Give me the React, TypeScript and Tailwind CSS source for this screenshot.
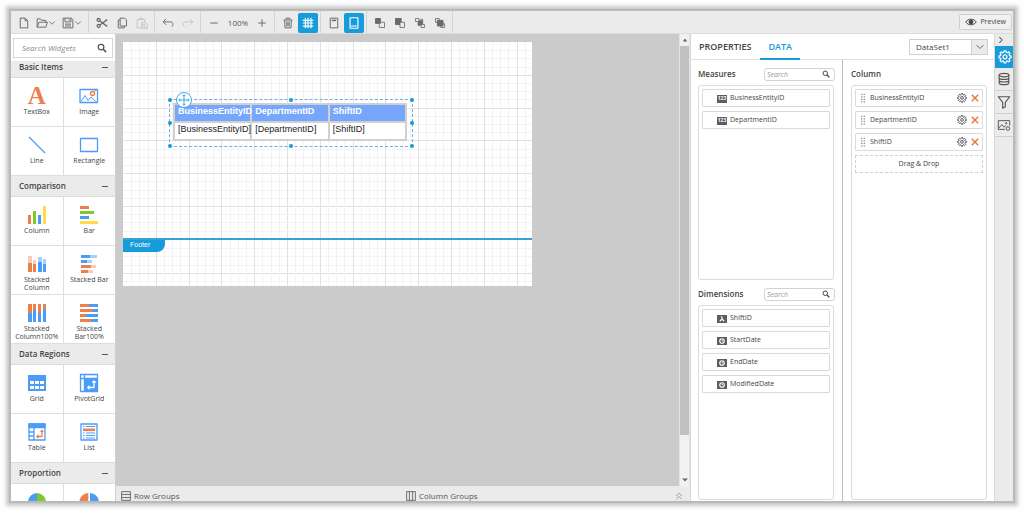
import React from "react";

type IconProps = { className?: string };
type SvgProps = { box?: string; className?: string; children: React.ReactNode };

function Svg({ box = "0 0 16 16", className = "size-3", children }: SvgProps) {
  return (
    <svg
      viewBox={box}
      className={`block shrink-0 ${className}`}
      fill="none"
      stroke="currentColor"
      strokeWidth="1.3"
      strokeLinejoin="round"
      aria-hidden="true"
    >
      {children}
    </svg>
  );
}

/* ---------- toolbar icons ---------- */

const NewIcon = () => (
  <Svg>
    <path d="M3 1.500h6.500L13 5v9.500H3zM9.500 1.500V5H13" />
  </Svg>
);
const OpenIcon = () => (
  <Svg>
    <path d="M1.500 13.500v-11h4.500l1.500 2h5.500v2.500M1.500 13.500l2.500-6.500h11.300l-2.300 6.500z" />
  </Svg>
);
const SaveIcon = () => (
  <Svg>
    <path d="M1.500 1.500h11l2 2v11h-13zM4 1.500v5h8v-5M4 9.500h8M4 12h8M9.500 3v2" />
  </Svg>
);
const Chevron = ({ className = "size-2" }: IconProps) => (
  <Svg box="0 0 10 10" className={className}>
    <path d="M1.500 3l3.500 3.500L8.500 3" strokeWidth="1" />
  </Svg>
);
const CutIcon = () => (
  <Svg>
    <g strokeWidth="1.700">
      <circle cx="3.500" cy="4" r="2" />
      <circle cx="3.500" cy="12" r="2" />
      <path d="M5.200 5.200L15 12.500M5.200 10.800L15 3.500" />
    </g>
  </Svg>
);
const CopyIcon = () => (
  <Svg>
    <path d="M5.500 1.500h6l2.500 2.500v8h-8.500zM5.500 4H3v10.500h8V12" />
  </Svg>
);
const PasteIcon = () => (
  <Svg>
    <path d="M7 14.500H1.500v-11h10V7M4.500 3.500v-2h4v2M7.500 7.500h5l2.500 2.500v5H7.500z" />
    <path d="M9 10h3M9 12.500h4" />
  </Svg>
);
const UndoIcon = () => (
  <Svg>
    <path d="M5.500 2.500L1.500 6.500l4 4M1.500 6.500H11c4 0 4.500 4.500 2 6.500" />
  </Svg>
);
const RedoIcon = () => (
  <Svg>
    <path d="M10.500 2.500l4 4-4 4M14.500 6.500H5c-4 0-4.500 4.500-2 6.500" />
  </Svg>
);
const MinusIcon = () => (
  <Svg>
    <path d="M3 8h10" />
  </Svg>
);
const PlusIcon = () => (
  <Svg>
    <path d="M3 8h10M8 3v10" />
  </Svg>
);
const TrashIcon = () => (
  <Svg>
    <path d="M2 4h12M5.500 3.500v-2h5v2M3.500 4l.5 10.500h8l.5-10.500M6.300 6v6.500M8 6v6.500M9.700 6v6.500" />
  </Svg>
);
const GridIcon = () => (
  <Svg className="size-3.5">
    <path d="M5 2v12M8 2v12M11.500 2v12M2 5h12M2 8h12M2 11.500h12" />
  </Svg>
);
const HeaderIcon = () => (
  <Svg>
    <path d="M3 1.500h10v13H3z" />
    <path d="M5 4.500h6" strokeWidth="2" />
  </Svg>
);
const FooterIcon = () => (
  <Svg className="size-3.5">
    <path d="M3.500 2h9v12h-9z" />
    <path d="M5 11.500h6" strokeWidth="1.600" strokeDasharray="1.500 .6" />
  </Svg>
);
const BringFrontIcon = () => (
  <Svg>
    <path d="M9.500 7H14v7H7V9.500" strokeWidth="1.100" />
    <path d="M2 2h6.500v6.500H2z" fill="currentColor" />
  </Svg>
);
const SendBackIcon = () => (
  <Svg>
    <path d="M2 2h7.500v8H2z" fill="currentColor" />
    <path d="M8 7h6v7H8z" fill="#ebebeb" strokeWidth="1.100" />
  </Svg>
);
const ForwardIcon = () => (
  <Svg>
    <path d="M5.500 5h6v6h-6z" fill="currentColor" />
    <path d="M2 2h4.500v4H2zM9.500 10H14v4H9.500z" fill="#ebebeb" strokeWidth="1.100" />
    <path d="M8.500 3h3v2" strokeWidth="1.100" />
  </Svg>
);
const BackwardIcon = () => (
  <Svg>
    <path d="M2 2h5v5H2zM9 9h5v5H9z" strokeWidth="1.100" />
    <path d="M4.500 4.500H12V12H4.500z" fill="currentColor" />
  </Svg>
);
const EyeIcon = () => (
  <Svg>
    <path d="M1 8c3-5 11-5 14 0-3 5-11 5-14 0z" />
    <circle cx="8" cy="8" r="2.600" fill="currentColor" />
  </Svg>
);
const SearchIcon = ({ className = "size-2.5" }: IconProps) => (
  <Svg className={className}>
    <circle cx="6.500" cy="6.500" r="4.500" strokeWidth="2" />
    <path d="M10 10l4.500 4.500" strokeWidth="2.600" />
  </Svg>
);
const gearPath =
  "M6.800 1h2.400l.4 2 1.400.6 1.700-1.200 1.700 1.700-1.200 1.700.6 1.400 2 .4v2.400l-2 .4-.6 1.400 1.200 1.700-1.700 1.700-1.700-1.200-1.400.6-.4 2H6.800l-.4-2-1.400-.6-1.700 1.200-1.700-1.700 1.200-1.700-.6-1.400-2-.4V7.600l2-.4.6-1.400-1.200-1.700 1.700-1.700L5 3.600 6.400 3z";
const GearIcon = ({ className = "size-2.5" }: IconProps) => (
  <Svg box="-0.500 0 17 18" className={className}>
    <path d={gearPath} strokeWidth="1.600" />
    <circle cx="8" cy="8.800" r="2.500" strokeWidth="1.600" />
  </Svg>
);

/* ---------- widget icons ---------- */

const ORANGE = "#ec7f4c";
const BLUE = "#4a9cf8";
const GREEN = "#7ec928";
const YELLOW = "#ffdc45";
const PALE_BLUE = "#a9d0fb";
const PALE_ORANGE = "#f5cdb8";

type Rect = [number, number, number, number, string];
const Bars = ({ rects }: { rects: Rect[] }) => (
  <Svg box="0 0 20 20" className="size-5">
    {rects.map(([x, y, w, h, fill], i) => (
      <rect key={i} x={x} y={y} width={w} height={h} fill={fill} stroke="none" />
    ))}
  </Svg>
);

const TextBoxIcon = () => (
  <span className="h-5 font-['Liberation_Serif',serif] text-[25px] leading-5 font-bold text-[#ec7f4c]" aria-hidden="true">
    A
  </span>
);
const ImageIcon = () => (
  <Svg box="0 0 20 20" className="size-5">
    <g stroke={BLUE}>
      <path d="M1 3.500h17.500v13H1z" />
      <path d="M2 15.500l4-6 3 5 3-3.500 5.500 5" strokeWidth="1" />
    </g>
    <circle cx="13.500" cy="7.500" r="2" stroke={ORANGE} />
    <path d="M15.500 5l2-1.500" stroke={ORANGE} />
  </Svg>
);
const LineIcon = () => (
  <Svg box="0 0 20 20" className="size-5">
    <path d="M2 2l16 16" stroke={BLUE} />
  </Svg>
);
const RectangleIcon = () => (
  <Svg box="0 0 20 20" className="size-5">
    <path d="M1.500 3.500h17v13h-17z" stroke={BLUE} />
  </Svg>
);
const ColumnIcon = () => (
  <Bars
    rects={[
      [1, 10, 3, 9, ORANGE],
      [6, 6, 3, 13, GREEN],
      [11, 10, 3, 9, BLUE],
      [16, 1, 3, 18, YELLOW],
    ]}
  />
);
const BarIcon = () => (
  <Bars
    rects={[
      [1, 1, 9, 3, ORANGE],
      [1, 6, 14, 3, GREEN],
      [1, 11, 9, 3, BLUE],
      [1, 16, 18, 3, YELLOW],
    ]}
  />
);
const StackedColumnIcon = () => (
  <Bars
    rects={[
      [1, 2, 4, 7, PALE_ORANGE],
      [1, 9, 4, 9, ORANGE],
      [6, 6, 3, 4, PALE_ORANGE],
      [6, 10, 3, 8, ORANGE],
      [11, 3, 4, 5, PALE_BLUE],
      [11, 8, 4, 10, BLUE],
      [16, 5, 3, 5, PALE_BLUE],
      [16, 10, 3, 8, BLUE],
    ]}
  />
);
const StackedBarIcon = () => (
  <Bars
    rects={[
      [2, 1, 9, 3, BLUE],
      [11, 1, 7, 3, PALE_BLUE],
      [2, 6, 6, 3, BLUE],
      [8, 6, 5, 3, PALE_BLUE],
      [2, 11, 10, 3, ORANGE],
      [12, 11, 5, 3, PALE_ORANGE],
      [2, 16, 7, 3, ORANGE],
      [9, 16, 5, 3, PALE_ORANGE],
    ]}
  />
);
const StackedColumn100Icon = () => (
  <Bars
    rects={[
      [1, 1, 4, 9, ORANGE],
      [1, 10, 4, 9, BLUE],
      [6, 1, 3, 6, ORANGE],
      [6, 7, 3, 12, BLUE],
      [11, 1, 3, 9, ORANGE],
      [11, 10, 3, 9, BLUE],
      [16, 1, 3, 5, ORANGE],
      [16, 6, 3, 13, BLUE],
    ]}
  />
);
const StackedBar100Icon = () => (
  <Bars
    rects={[
      [1, 1, 9, 3, ORANGE],
      [10, 1, 9, 3, BLUE],
      [1, 6, 13, 3, ORANGE],
      [14, 6, 5, 3, BLUE],
      [1, 11, 6, 3, ORANGE],
      [7, 11, 12, 3, BLUE],
      [1, 16, 11, 3, ORANGE],
      [12, 16, 7, 3, BLUE],
    ]}
  />
);
const GridWidgetIcon = () => (
  <Bars
    rects={[
      [1, 2, 18, 16, BLUE],
      [3, 8, 4, 3, "#fff"],
      [8, 8, 4, 3, "#fff"],
      [13, 8, 4, 3, "#fff"],
      [3, 13, 4, 3, "#fff"],
      [8, 13, 4, 3, "#fff"],
      [13, 13, 4, 3, "#fff"],
    ]}
  />
);
const PivotGridIcon = () => (
  <Svg box="0 0 20 20" className="size-5">
    <path d="M1.500 1.500h17v17h-17zM5.500 1.500v17M1.500 5.500h17" stroke={BLUE} />
    <path d="M6 6h12v12H6z" fill={BLUE} stroke={BLUE} />
    <path d="M15 8v6.500H9M13.300 9.500L15 8l1.700 1.500M10.500 12.800L8.800 14.500l1.700 1.700" stroke="#fff" />
  </Svg>
);
const TableWidgetIcon = () => (
  <Svg box="0 0 20 20" className="size-5">
    <path d="M2 2h16v16H2zM7 6v12M2 10h5M2 14h5" stroke={BLUE} />
    <path d="M2 2h16v3.500H2z" fill={BLUE} stroke={BLUE} />
    <path d="M15 8.500v6H10M13.500 9.800L15 8.500l1.500 1.300M11.300 13L9.800 14.500l1.500 1.500" stroke={ORANGE} />
  </Svg>
);
const ListWidgetIcon = () => (
  <Svg box="0 0 20 20" className="size-5">
    <path d="M2 2h16v16H2z" stroke={BLUE} />
    <path d="M4 4.500h1.500M7 4.500h9M4 11h1.500M7 11h9M4 13.500h1.500M7 13.500h9M4 16h1.500M7 16h9" stroke={BLUE} strokeWidth="1" />
    <path d="M4 7.800h12" stroke={ORANGE} strokeWidth="2.600" />
  </Svg>
);
const PieIcon = () => (
  <Svg box="0 0 20 20" className="size-5">
    <path d="M10 10V1a9 9 0 0 0 0 18z" fill={BLUE} stroke="none" />
    <path d="M10 10V1a9 9 0 0 1 0 18z" fill={GREEN} stroke="none" />
  </Svg>
);
const DoughnutIcon = () => (
  <Svg box="0 0 20 20" className="size-5">
    <path d="M9.300 1a9 9 0 0 0 0 18z" fill={ORANGE} stroke="none" />
    <path d="M11 1a9 9 0 0 1 0 18z" fill={BLUE} stroke="none" />
  </Svg>
);

type Widget = { name: string; iconOnly?: boolean; Icon: () => React.ReactElement };
const sections: { title: string; widgets: Widget[] }[] = [
  {
    title: "Basic Items",
    widgets: [
      { name: "TextBox", Icon: TextBoxIcon },
      { name: "Image", Icon: ImageIcon },
      { name: "Line", Icon: LineIcon },
      { name: "Rectangle", Icon: RectangleIcon },
    ],
  },
  {
    title: "Comparison",
    widgets: [
      { name: "Column", Icon: ColumnIcon },
      { name: "Bar", Icon: BarIcon },
      { name: "Stacked Column", Icon: StackedColumnIcon },
      { name: "Stacked Bar", Icon: StackedBarIcon },
      { name: "Stacked Column100%", Icon: StackedColumn100Icon },
      { name: "Stacked Bar100%", Icon: StackedBar100Icon },
    ],
  },
  {
    title: "Data Regions",
    widgets: [
      { name: "Grid", Icon: GridWidgetIcon },
      { name: "PivotGrid", Icon: PivotGridIcon },
      { name: "Table", Icon: TableWidgetIcon },
      { name: "List", Icon: ListWidgetIcon },
    ],
  },
  {
    title: "Proportion",
    widgets: [
      { name: "Pie", iconOnly: true, Icon: PieIcon },
      { name: "Doughnut", iconOnly: true, Icon: DoughnutIcon },
    ],
  },
];

/* ---------- toolbar ---------- */

type ToolProps = { label: string; active?: boolean; faded?: boolean; children: React.ReactNode };
function Tool({ label, active, faded, children }: ToolProps) {
  return (
    <button
      type="button"
      aria-label={label}
      className={`flex h-5 w-5 items-center justify-center rounded-[2px] ${
        active ? "bg-[#169bdb] text-white" : faded ? "text-[#c4c4c4]" : "text-[#6a6a6a]"
      }`}
    >
      {children}
    </button>
  );
}

function MenuTool({ label, children }: ToolProps) {
  return (
    <button type="button" aria-label={label} className="flex h-5 w-[26px] items-center pl-[2px] text-[#6a6a6a]">
      {children}
      <Chevron />
    </button>
  );
}

function ToolGroup({ children }: { children: React.ReactNode }) {
  return <div className="flex h-full items-center border-r border-[#d4d4d4] pt-px pr-[2px] pl-[3px]">{children}</div>;
}

function Toolbar() {
  return (
    <header className="flex h-[23px] shrink-0 items-center border-b border-[#dcdcdc] bg-[#ebebeb]">
      <ToolGroup>
        <Tool label="New"><NewIcon /></Tool>
        <MenuTool label="Open"><OpenIcon /></MenuTool>
        <MenuTool label="Save"><SaveIcon /></MenuTool>
      </ToolGroup>
      <ToolGroup>
        <Tool label="Cut"><CutIcon /></Tool>
        <Tool label="Copy"><CopyIcon /></Tool>
        <Tool label="Paste" faded><PasteIcon /></Tool>
      </ToolGroup>
      <ToolGroup>
        <Tool label="Undo"><UndoIcon /></Tool>
        <Tool label="Redo" faded><RedoIcon /></Tool>
      </ToolGroup>
      <ToolGroup>
        <Tool label="Zoom out"><MinusIcon /></Tool>
        <span className="w-7 text-center text-[8px] text-[#555]">100%</span>
        <Tool label="Zoom in"><PlusIcon /></Tool>
      </ToolGroup>
      <ToolGroup>
        <Tool label="Delete"><TrashIcon /></Tool>
        <Tool label="Show grid" active><GridIcon /></Tool>
      </ToolGroup>
      <ToolGroup>
        <Tool label="Header"><HeaderIcon /></Tool>
        <Tool label="Footer" active><FooterIcon /></Tool>
      </ToolGroup>
      <ToolGroup>
        <Tool label="Bring to front"><BringFrontIcon /></Tool>
        <Tool label="Send to back"><SendBackIcon /></Tool>
        <Tool label="Bring forward"><ForwardIcon /></Tool>
        <Tool label="Send backward"><BackwardIcon /></Tool>
      </ToolGroup>
      <button
        type="button"
        className="mr-px ml-auto flex h-4 items-center gap-[3px] rounded-[2px] border border-[#cfcfcf] bg-[#f1f1f1] px-[5px] text-[7px] text-[#444]"
      >
        <EyeIcon />
        Preview
      </button>
    </header>
  );
}

/* ---------- widget palette ---------- */

function Palette() {
  return (
    <aside className="flex w-[105px] shrink-0 flex-col border-r border-[#cfcfcf] bg-[#ebebeb]">
      <div className="h-[27px] shrink-0 bg-white px-[2px] pt-1">
        <label className="flex h-5 items-center border border-[#d6d6d6] bg-white pr-[5px] pl-2 text-[#555]">
          <input
            type="text"
            aria-label="Search Widgets"
            placeholder="Search Widgets"
            className="min-w-0 flex-1 text-[8px] outline-none placeholder:text-[#8a8a8a] placeholder:italic"
          />
          <SearchIcon />
        </label>
      </div>
      <div className="min-h-0 flex-1 overflow-hidden">
        <div className="-mt-1">
          {sections.map((section) => (
            <section key={section.title}>
              <h2 className="flex h-[21px] items-center justify-between border-b border-[#dadada] bg-[#ebebeb] pr-1.5 pl-2 text-[8px] font-semibold text-[#444]">
                {section.title}
                <button type="button" aria-label={`Collapse ${section.title}`} className="mr-px h-px w-1.5 bg-[#555]" />
              </h2>
              <div className="grid grid-cols-2 gap-px bg-[#dedede] pb-px">
                {section.widgets.map(({ name, iconOnly, Icon }) => (
                  <button
                    key={name}
                    type="button"
                    aria-label={name}
                    className="flex h-12 flex-col items-center gap-[2px] bg-white px-1 pt-2 text-center text-[7px] leading-2 text-[#444]"
                  >
                    <Icon />
                    {!iconOnly && name}
                  </button>
                ))}
              </div>
            </section>
          ))}
        </div>
      </div>
    </aside>
  );
}

/* ---------- design surface ---------- */

const GRID_STEP = 8.2;
const gridLines = Array.from({ length: 50 }, (_, i) => i + 1);

function GridPaper() {
  return (
    <svg className="absolute inset-0 size-full" shapeRendering="crispEdges" aria-hidden="true">
      {gridLines.map((n) => {
        const at = Math.round(n * GRID_STEP);
        return (
          <g key={n} fill={n % 4 === 0 ? "#e1e1e1" : "#f3f3f3"}>
            <rect x={at} y="0" width="1" height="100%" />
            <rect x="0" y={at} width="100%" height="1" />
          </g>
        );
      })}
    </svg>
  );
}

const handles = [
  "left-0 top-0",
  "left-1/2 top-0",
  "left-full top-0",
  "left-0 top-1/2",
  "left-full top-1/2",
  "left-0 top-full",
  "left-1/2 top-full",
  "left-full top-full",
];
const fields = ["BusinessEntityID", "DepartmentID", "ShiftID"];

function ReportTable() {
  return (
    <div className="absolute top-[57px] left-[46px] border border-dashed border-[#6fb0e2] pt-[3px] pr-[5px] pb-[5px] pl-[3px] font-['Liberation_Sans',Arial,sans-serif] text-[9px] leading-3">
      <table className="w-[234px] table-fixed border-collapse bg-white">
        <thead>
          <tr className="h-[18px] bg-[#77a7fd] text-white">
            {fields.map((field) => (
              <th key={field} scope="col" className="border-2 border-[#d0d0d0] p-0 pb-1 pl-[3px] text-left font-bold whitespace-nowrap">
                {field}
              </th>
            ))}
          </tr>
        </thead>
        <tbody>
          <tr className="h-[18px] text-[#222]">
            {fields.map((field) => (
              <td key={field} className="border-2 border-[#d0d0d0] p-0 pb-1 pl-[3px] whitespace-nowrap">
                [{field}]
              </td>
            ))}
          </tr>
        </tbody>
      </table>
      {handles.map((place) => (
        <span key={place} className={`absolute size-1 -translate-1/2 rounded-full bg-[#169bdb] ${place}`} />
      ))}
      <span className="absolute -top-2 left-1.5 flex size-4 items-center justify-center rounded-full border border-[#4aa8de] bg-white text-[#3f9fd8]">
        <Svg>
          <path d="M8 1v14M1 8h14M6 3l2-2 2 2M6 13l2 2 2-2M3 6L1 8l2 2M13 6l2 2-2 2" />
        </Svg>
      </span>
    </div>
  );
}

function Designer() {
  return (
    <main className="flex min-w-0 flex-1 flex-col">
      <div className="flex min-h-0 flex-1">
        <div className="min-w-0 flex-1 overflow-hidden bg-[#cbcbcb] pt-2 pl-[7px]">
          <div className="w-[409px] bg-white">
            <div className="relative h-[196px]">
              <GridPaper />
              <ReportTable />
            </div>
            <div className="relative h-12 border-t-2 border-[#3a9fdb]">
              <GridPaper />
              <span className="relative flex h-3 w-[42px] items-center rounded-br-lg bg-[#169bdb] pb-[2px] pl-[7px] font-['Liberation_Sans',Arial,sans-serif] text-[7px] text-white">
                Footer
              </span>
            </div>
          </div>
        </div>
        <div className="flex w-[11px] shrink-0 flex-col items-center border-x border-[#e2e2e2] bg-[#f0f2f2] text-[#666]">
          <div className="flex h-3 items-center">
            <Svg box="0 0 8 8" className="size-1.5">
              <path d="M1 6l3-4 3 4z" fill="currentColor" stroke="none" />
            </Svg>
          </div>
          <div className="w-full flex-[10] bg-[#c1c1c1]" />
          <div className="flex-1" />
          <div className="flex h-3 items-center">
            <Svg box="0 0 8 8" className="size-1.5">
              <path d="M0 2l4 4 4-4z" fill="currentColor" stroke="none" />
            </Svg>
          </div>
        </div>
      </div>
      <footer className="flex h-[15px] shrink-0 items-center bg-[#ebebeb] px-[5px] pt-1 text-[8px] text-[#555]">
        <div className="flex flex-1 items-center gap-[3px]">
          <Svg className="size-2.5">
            <path d="M1 1h14v14H1zM1 5.500h14M1 10.500h14" />
          </Svg>
          Row Groups
        </div>
        <div className="flex flex-1 items-center gap-[3px] pl-1.5">
          <Svg className="size-2.5">
            <path d="M1 1h14v14H1zM5.500 1v14M10.500 1v14" />
          </Svg>
          Column Groups
          <button type="button" aria-label="Expand groups" className="mr-[2px] ml-auto text-[#8a8a8a]">
            <Svg box="0 0 10 10" className="size-2">
              <path d="M1.500 5L5 1.500 8.500 5M1.500 9L5 5.500 8.500 9" strokeWidth="1" />
            </Svg>
          </button>
        </div>
      </footer>
    </main>
  );
}

/* ---------- data panel ---------- */

type Kind = "number" | "text" | "date";
function KindBadge({ kind }: { kind: Kind }) {
  return (
    <span className="flex h-2 w-2.5 shrink-0 items-center justify-center bg-[#5c5c62] text-[5px] leading-none font-bold text-white">
      {kind === "number" && "123"}
      {kind === "text" && (
        <Svg className="size-1.5">
          <path d="M2 14l6-6 6 6M8 8V2M5 2h3" strokeWidth="3" />
        </Svg>
      )}
      {kind === "date" && (
        <Svg className="size-1.5">
          <circle cx="8" cy="8" r="6" strokeWidth="3" />
          <path d="M8 5v3h3" strokeWidth="2" />
        </Svg>
      )}
    </span>
  );
}

function FieldList({ title, items }: { title: string; items: [string, Kind][] }) {
  return (
    <section className="flex min-h-0 flex-1 flex-col gap-[5px]">
      <div className="flex h-3 shrink-0 items-center justify-between">
        <h3 className="text-[8px] font-semibold text-[#444]">{title}</h3>
        <label className="-mr-px flex h-[13px] w-[71px] items-center rounded-[3px] border border-[#d2d2d2] pr-1 pl-[2px] text-[#444]">
          <input
            type="text"
            aria-label={`Search ${title}`}
            placeholder="Search"
            className="h-full min-w-0 flex-1 text-[7px] outline-none placeholder:text-[#999] placeholder:italic"
          />
          <SearchIcon className="size-2" />
        </label>
      </div>
      <ul className="flex min-h-0 flex-1 flex-col gap-1 rounded-[3px] border border-[#dcdcdc] p-[3px]">
        {items.map(([name, kind]) => (
          <li key={name} className="flex h-[18px] items-center gap-[3px] rounded-[1px] border border-[#dadada] pt-px pl-3.5 text-[7px] text-[#444]">
            <KindBadge kind={kind} />
            {name}
          </li>
        ))}
      </ul>
    </section>
  );
}

function DataPanel() {
  return (
    <section className="flex w-[305px] shrink-0 flex-col border-x border-[#d8d8d8] bg-white">
      <nav className="flex h-[26px] shrink-0 items-center border-b border-[#dedede] pr-1.5 pl-[2px] text-[9px] font-semibold text-[#444]">
        <button type="button" className="h-[26px] px-1.5 pt-px">PROPERTIES</button>
        <button type="button" className="ml-[3px] h-[26px] border-b-2 border-[#169bdb] px-2 pt-[3px] text-[#169bdb]">DATA</button>
        <div className="relative ml-auto h-4 w-[79px] text-[8px] font-normal text-[#444]">
          <select aria-label="Data set" className="size-full appearance-none border border-[#cfcfcf] bg-white pl-1.5 outline-none">
            <option>DataSet1</option>
          </select>
          <span className="pointer-events-none absolute top-0 right-0 flex h-full w-[17px] items-center justify-center border border-[#cfcfcf] bg-[#ebebeb] text-[#666]">
            <Chevron className="size-2.5" />
          </span>
        </div>
      </nav>
      <div className="flex min-h-0 flex-1">
        <div className="flex w-[152px] shrink-0 flex-col gap-2 border-r border-[#bdbdbd] pt-2 pr-2 pb-px pl-[7px]">
          <FieldList
            title="Measures"
            items={[
              ["BusinessEntityID", "number"],
              ["DepartmentID", "number"],
            ]}
          />
          <FieldList
            title="Dimensions"
            items={[
              ["ShiftID", "text"],
              ["StartDate", "date"],
              ["EndDate", "date"],
              ["ModifiedDate", "date"],
            ]}
          />
        </div>
        <div className="flex flex-1 flex-col gap-[5px] pt-2 pr-[7px] pb-px pl-2">
          <h3 className="flex h-3 items-center text-[8px] font-semibold text-[#444]">Column</h3>
          <ul className="flex min-h-0 flex-1 flex-col gap-1 rounded-[3px] border border-[#dcdcdc] p-[3px] text-[7px] text-[#444]">
            {fields.map((field) => (
              <li key={field} className="flex h-[18px] items-center gap-1 rounded-[1px] border border-[#dadada] pr-[3px] pl-1">
                <Svg box="0 0 6 12" className="h-2.5 w-1.5 text-[#777]">
                  <path d="M1.500 1v11M4.500 1v11" strokeDasharray="1.500 1.500" />
                </Svg>
                <span className="flex-1 pt-px">{field}</span>
                <button type="button" aria-label={`${field} settings`} className="text-[#444]">
                  <GearIcon />
                </button>
                <button type="button" aria-label={`Remove ${field}`} className="text-[#ee6b33]">
                  <Svg box="0 0 10 10" className="size-2">
                    <path d="M1 1l8 8M9 1L1 9" strokeWidth="1.600" />
                  </Svg>
                </button>
              </li>
            ))}
            <li className="flex h-[18px] items-center justify-center border border-dashed border-[#d0d0d0]">Drag &amp; Drop</li>
          </ul>
        </div>
      </div>
    </section>
  );
}

function SideRail() {
  const cell = "flex h-[23px] w-full items-center justify-center border-b border-[#d0d0d0] text-[#555]";
  return (
    <nav className="flex w-[18px] shrink-0 flex-col bg-[#ebebeb]">
      <button type="button" aria-label="Collapse panel" className="flex h-3 items-center pl-[2px] text-[#555]">
        <Svg box="0 0 10 10" className="size-2">
          <path d="M3 1.500L6.500 5 3 8.500" />
        </Svg>
      </button>
      <button type="button" aria-label="Properties" className="flex h-[22px] w-full items-center justify-end bg-[#169bdb] pr-px text-white">
        <GearIcon className="size-3.5" />
      </button>
      <button type="button" aria-label="Data" className={cell}>
        <Svg className="size-3.5">
          <ellipse cx="8" cy="3.500" rx="5.500" ry="2" />
          <path d="M2.500 3.500v9c0 2.600 11 2.600 11 0v-9M2.500 6.500c0 2.600 11 2.600 11 0M2.500 9.500c0 2.600 11 2.600 11 0" />
        </Svg>
      </button>
      <button type="button" aria-label="Filters" className={cell}>
        <Svg className="size-3.5">
          <path d="M1.500 2h13L9.500 8.500v5l-3 1.500V8.500z" />
        </Svg>
      </button>
      <button type="button" aria-label="Images" className={cell}>
        <Svg className="size-3.5">
          <path d="M9 13H1.500V3h13v5.500M2 11.500l3.500-4 2.500 3 2-2" strokeWidth="1.100" />
          <circle cx="10.500" cy="6" r=".9" strokeWidth="1" />
          <circle cx="12.500" cy="12" r="2" strokeWidth="1.500" stroke="#888" />
        </Svg>
      </button>
    </nav>
  );
}

export default function App() {
  return (
    <div className="h-screen overflow-hidden bg-white p-[11px] pb-3 font-['Open_Sans','Noto_Sans',sans-serif]">
      <div className="flex h-full flex-col bg-white shadow-[0_0_0_2px_#b9b9b9,0_0_3px_4px_#c4c4c4,0_0_4px_7px_#f0f0f0]">
        <Toolbar />
        <div className="flex min-h-0 flex-1">
          <Palette />
          <Designer />
          <DataPanel />
          <SideRail />
        </div>
      </div>
    </div>
  );
}
